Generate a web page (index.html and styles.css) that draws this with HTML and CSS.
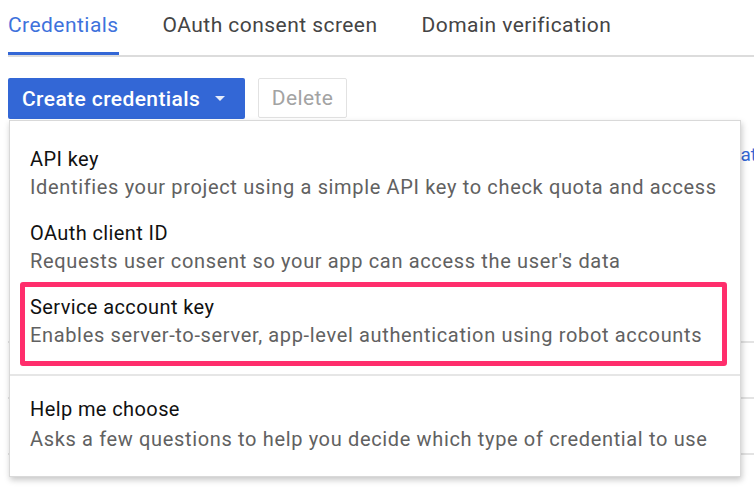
FILE: index.html
```html
<!DOCTYPE html>
<html>
<head>
<meta charset="utf-8">
<link rel="stylesheet" href="styles.css">
</head>
<body>
<div class="page">
  <nav class="tabs">
    <a class="tab active">Credentials</a>
    <a class="tab">OAuth consent screen</a>
    <a class="tab">Domain verification</a>
  </nav>
  <div class="actions">
    <button class="btn-primary">Create credentials <span class="caret"></span></button>
    <button class="btn-secondary">Delete</button>
    <div class="menu">
      <div class="item">
        <div class="item-title">API key</div>
        <div class="item-desc">Identifies your project using a simple API key to check quota and access</div>
      </div>
      <div class="item">
        <div class="item-title">OAuth client ID</div>
        <div class="item-desc">Requests user consent so your app can access the user's data</div>
      </div>
      <div class="item highlighted">
        <div class="item-title">Service account key</div>
        <div class="item-desc">Enables server-to-server, app-level authentication using robot accounts</div>
        <div class="mark"></div>
      </div>
      <div class="sep"></div>
      <div class="item help">
        <div class="item-title">Help me choose</div>
        <div class="item-desc">Asks a few questions to help you decide which type of credential to use</div>
      </div>
    </div>
  </div>
  <div class="behind">
    <p class="intro"><span class="muted">Create credentials to access your enabled APIs.</span> <a class="link">See the documentation</a></p>
    <div class="table">
      <div class="row"></div>
      <div class="row"></div>
      <div class="row"></div>
    </div>
  </div>
</div>
</body>
</html>
```
FILE: styles.css
```css
html, body {
  margin: 0;
  padding: 0;
  background: #fff;
  overflow: hidden;
}
body {
  font-family: Roboto, "Liberation Sans", Arial, sans-serif;
  color: #212121;
}
.page {
  padding: 8px 0 0 8px;
  width: 746px;
  height: 486px;
  overflow: hidden;
}
.tabs {
  display: flex;
  gap: 44px;
  padding-top: 5px;
  border-bottom: 2px solid #dcdcdc;
}
.tab {
  font-size: 21px;
  letter-spacing: 0.45px;
  line-height: 24px;
  padding-bottom: 15px;
  border-bottom: 3px solid transparent;
  color: #444;
  white-space: nowrap;
}
.tab.active {
  color: #3e72dc;
  border-bottom-color: #3367d6;
}
.actions {
  position: relative;
  display: flex;
  align-items: flex-start;
  gap: 13px;
  margin-top: 21px;
}
.btn-primary {
  height: 41px;
  width: 237px;
  background: #3367d6;
  border: 0;
  border-radius: 2px;
  color: #fff;
  font-family: Roboto, "Liberation Sans", Arial, sans-serif;
  font-size: 21px;
  letter-spacing: 0.4px;
  font-weight: 500;
  padding: 0 0 0 14px;
  text-align: left;
  display: flex;
  align-items: center;
  white-space: nowrap;
}
.caret {
  display: inline-block;
  margin-left: 15px;
  width: 0;
  height: 0;
  border-left: 5px solid transparent;
  border-right: 5px solid transparent;
  border-top: 5px solid #e6ecfa;
}
.btn-secondary {
  height: 40px;
  width: 89px;
  background: #fff;
  border: 1px solid #e2e2e2;
  border-radius: 2px;
  color: #a3a3a3;
  font-family: Roboto, "Liberation Sans", Arial, sans-serif;
  font-size: 21px;
  letter-spacing: 0.4px;
  padding: 0;
}
.menu {
  position: absolute;
  left: 1px;
  top: 42px;
  width: 730px;
  padding: 15px 0 14px;
  background: #fff;
  border: 1px solid #d9d9d9;
  box-shadow: 1px 3px 6px rgba(0,0,0,0.22);
  z-index: 2;
}
.item {
  position: relative;
  padding: 9px 20px;
}
.item-title {
  font-size: 20px;
  letter-spacing: 0.4px;
  line-height: 28px;
  color: #111;
  white-space: nowrap;
}
.item-desc {
  font-size: 20px;
  letter-spacing: 0.65px;
  line-height: 28px;
  color: #616161;
  white-space: nowrap;
}
.mark {
  position: absolute;
  left: 10px;
  right: 13px;
  top: -2px;
  bottom: -8px;
  border: 5px solid #ff2e6c;
  border-radius: 3px;
}
.sep {
  height: 2px;
  background: #e6e6e6;
  margin: 16px 0 10px;
}
.help .item-desc {
  margin-top: 2px;
}
.behind {
  padding-top: 25px;
}
.intro {
  margin: 0 -29px 0 0;
  display: flex;
  justify-content: flex-end;
  gap: 5px;
  font-size: 19px;
  line-height: 22px;
  white-space: nowrap;
}
.muted {
  color: #666;
}
.link {
  color: #3367d6;
}
.table {
  margin-top: 175px;
}
.row {
  height: 54px;
  border-top: 2px solid #e3e3e3;
}
```
